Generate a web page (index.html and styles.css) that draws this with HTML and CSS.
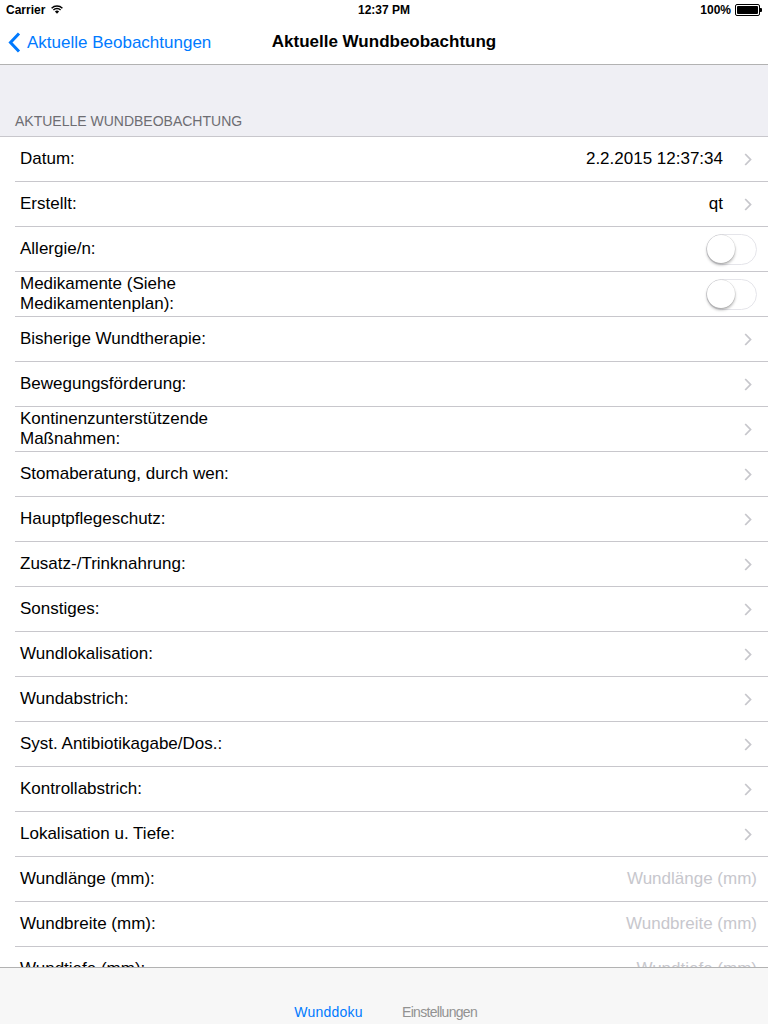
FILE: index.html
```html
<!DOCTYPE html>
<html lang="de">
  <head>
    <meta charset="UTF-8" />
    <meta name="viewport" content="width=device-width, initial-scale=1.0" />
    <title>Aktuelle Wundbeobachtung</title>
    <link rel="stylesheet" href="styles.css">
  </head>
  <body>
    <div class="status-bar">
      <div class="status-left">
        Carrier
        <svg class="wifi" width="12" height="9" viewBox="0 0 12 9">
          <path d="M0.6 3.2 A7.6 7.6 0 0 1 11.4 3.2" fill="none" stroke="#000" stroke-width="1.4" />
          <path d="M2.4 5 A5 5 0 0 1 9.6 5" fill="none" stroke="#000" stroke-width="1.4" />
          <path d="M6 8.8 L3.9 6.6 A3 3 0 0 1 8.1 6.6 Z" fill="#000" />
        </svg>
      </div>
      <div class="status-time">12:37 PM</div>
      <div class="status-right">
        100%
        <span class="battery"><span class="battery-level"></span></span>
        <span class="battery-tip"></span>
      </div>
    </div>

    <div class="nav-bar">
      <a class="back" href="#">
        <svg width="13" height="21" viewBox="0 0 13 21">
          <path d="M11 1.5 L2.5 10.5 L11 19.5" fill="none" stroke="#007aff" stroke-width="3" />
        </svg>
        Aktuelle Beobachtungen
      </a>
      <div class="nav-title">Aktuelle Wundbeobachtung</div>
    </div>

    <div class="content">
      <div class="section-header">AKTUELLE WUNDBEOBACHTUNG</div>
      <ul class="table" id="table"></ul>
    </div>

    <div class="tab-bar">
      <span class="tab active">Wunddoku</span>
      <span class="tab tab-settings">Einstellungen</span>
    </div>

    <script>
      // Rows of the form: label, kind ("chevron" | "switch" | "input"), value
      const rows = [
        ['Datum:', 'chevron', '2.2.2015 12:37:34'],
        ['Erstellt:', 'chevron', 'qt'],
        ['Allergie/n:', 'switch'],
        ['Medikamente (Siehe Medikamentenplan):', 'switch'],
        ['Bisherige Wundtherapie:', 'chevron'],
        ['Bewegungsförderung:', 'chevron'],
        ['Kontinenzunterstützende Maßnahmen:', 'chevron'],
        ['Stomaberatung, durch wen:', 'chevron'],
        ['Hauptpflegeschutz:', 'chevron'],
        ['Zusatz-/Trinknahrung:', 'chevron'],
        ['Sonstiges:', 'chevron'],
        ['Wundlokalisation:', 'chevron'],
        ['Wundabstrich:', 'chevron'],
        ['Syst. Antibiotikagabe/Dos.:', 'chevron'],
        ['Kontrollabstrich:', 'chevron'],
        ['Lokalisation u. Tiefe:', 'chevron'],
        ['Wundlänge (mm):', 'input', 'Wundlänge (mm)'],
        ['Wundbreite (mm):', 'input', 'Wundbreite (mm)'],
        ['Wundtiefe (mm):', 'input', 'Wundtiefe (mm)']
      ];

      const chevron =
        '<svg class="chevron" width="8" height="13" viewBox="0 0 8 13">' +
        '<path d="M1.2 1 L6.5 6.5 L1.2 12" fill="none" stroke="#c7c7cc" stroke-width="1.8" /></svg>';

      const table = document.getElementById('table');
      rows.forEach(function (row) {
        const li = document.createElement('li');
        li.className = 'row row-' + row[1];
        let html = '<span class="label">' + row[0] + '</span>';
        if (row[1] === 'chevron') {
          html += '<span class="value">' + (row[2] || '') + '</span>' + chevron;
        } else if (row[1] === 'switch') {
          html += '<span class="switch"><span class="knob"></span></span>';
        } else {
          html += '<input class="field" type="text" placeholder="' + row[2] + '" />';
        }
        li.innerHTML = html;
        table.appendChild(li);
      });
    </script>
  </body>
</html>
```

FILE: styles.css
```css
html,
body {
  height: 100%;
}

body {
  font-family: "Liberation Sans", Arial, sans-serif;
  margin: 0;
  padding: 0;
  display: flex;
  flex-direction: column;
  background-color: #efeff4;
  color: #000;
  overflow: hidden;
}

/* Status bar */
.status-bar {
  height: 20px;
  background-color: #fff;
  display: flex;
  align-items: center;
  justify-content: space-between;
  padding: 0 6px;
  font-size: 12px;
  font-weight: bold;
  flex-shrink: 0;
}

.status-left,
.status-right {
  display: flex;
  align-items: center;
  width: 120px;
}

.status-right {
  justify-content: flex-end;
}

.status-time {
  flex: 1;
  text-align: center;
}

.wifi {
  margin-left: 6px;
  margin-top: -1px;
}

.battery {
  display: inline-block;
  width: 21px;
  height: 8px;
  border: 1px solid #000;
  border-radius: 2px;
  margin-left: 4px;
  padding: 1px;
  box-sizing: content-box;
}

.battery-level {
  display: block;
  width: 100%;
  height: 100%;
  background-color: #000;
  border-radius: 1px;
}

.battery-tip {
  display: inline-block;
  width: 2px;
  height: 4px;
  background-color: #000;
  border-radius: 0 1px 1px 0;
}

/* Navigation bar */
.nav-bar {
  height: 44px;
  background-color: #fff;
  border-bottom: 1px solid #b2b2b2;
  display: flex;
  align-items: center;
  position: relative;
  flex-shrink: 0;
}

.back {
  display: flex;
  align-items: center;
  color: #007aff;
  text-decoration: none;
  font-size: 17px;
  padding-left: 8px;
  margin-top: 1px;
}

.back svg {
  margin-right: 6px;
}

.nav-title {
  position: absolute;
  left: 0;
  right: 0;
  text-align: center;
  font-size: 17px;
  font-weight: bold;
  pointer-events: none;
}

/* Table */
.content {
  flex: 1;
  overflow: hidden;
}

.section-header {
  height: 71px;
  box-sizing: border-box;
  padding: 0 15px 7px;
  display: flex;
  align-items: flex-end;
  font-size: 14px;
  color: #6d6d72;
}

.table {
  list-style: none;
  margin: 0;
  padding: 0;
  background-color: #fff;
  border-top: 1px solid #c8c7cc;
}

.row {
  display: flex;
  align-items: center;
  height: 44px;
  margin-left: 15px;
  padding-left: 5px;
  padding-right: 16px;
  border-bottom: 1px solid #c8c7cc;
  font-size: 17px;
}

.row-switch,
.row-input {
  padding-right: 11px;
}

.label {
  max-width: 240px;
  line-height: 20px;
  flex-shrink: 0;
}

.value {
  flex: 1;
  text-align: right;
  margin-right: 21px;
}

.chevron {
  flex-shrink: 0;
}

.switch {
  margin-left: auto;
  width: 51px;
  height: 31px;
  box-sizing: border-box;
  border: 1.5px solid #e5e5ea;
  border-radius: 16px;
  position: relative;
  background-color: #fff;
}

.knob {
  position: absolute;
  top: 0;
  left: 0;
  width: 28px;
  height: 28px;
  border-radius: 50%;
  background-color: #fff;
  box-shadow: 0 2px 3px rgba(0, 0, 0, 0.3), 0 0 0 0.5px rgba(0, 0, 0, 0.12);
}

.field {
  flex: 1;
  min-width: 0;
  border: none;
  outline: none;
  padding: 0;
  background: transparent;
  text-align: right;
  font-family: inherit;
  font-size: 17px;
  color: #000;
}

.field::placeholder {
  color: #c7c7cd;
}

/* Tab bar */
.tab-bar {
  height: 57px;
  flex-shrink: 0;
  background-color: #f7f7f7;
  border-top: 1px solid #b2b2b2;
  display: flex;
  justify-content: center;
  align-items: flex-end;
  padding-bottom: 4px;
  box-sizing: border-box;
}

.tab {
  width: 111px;
  text-align: center;
  font-size: 14px;
  color: #929292;
  letter-spacing: 0.2px;
}

.tab-settings {
  letter-spacing: -0.7px;
}

.tab.active {
  color: #007aff;
}
```
